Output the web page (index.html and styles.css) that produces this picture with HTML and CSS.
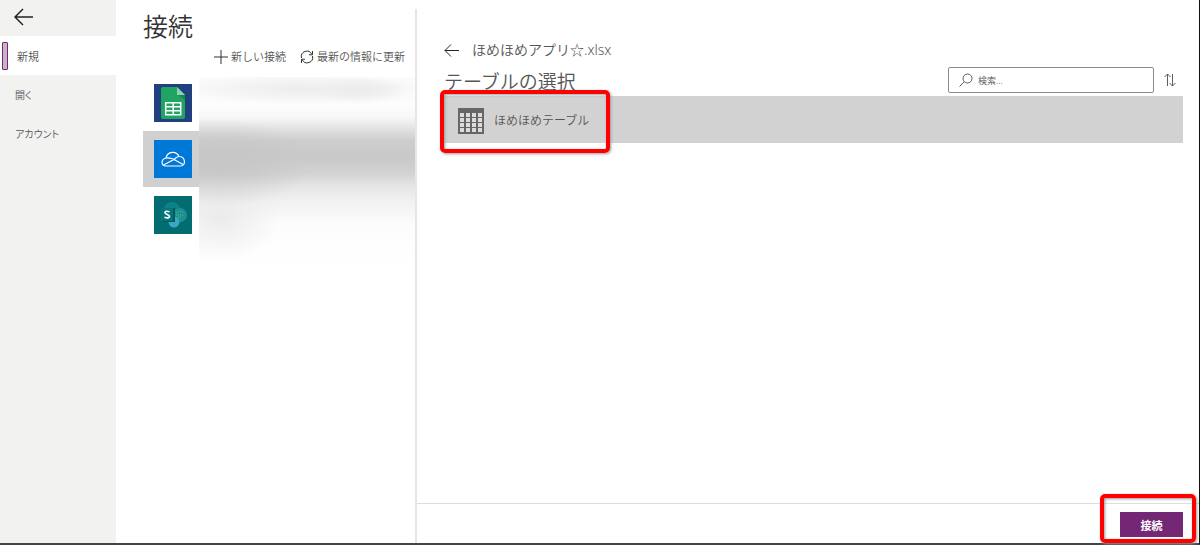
FILE: index.html
```html
<!DOCTYPE html>
<html lang="ja">
<head>
  <meta charset="UTF-8">
  <title>接続</title>
  <meta name="viewport" content="width=device-width, initial-scale=1.0">
  <link rel="stylesheet" href="styles.css">
</head>
<body>

<div class="app">

  <!-- Left menu -->
  <nav class="sidebar">
    <button class="back" type="button" aria-label="戻る">
      <svg width="20" height="18" viewBox="0 0 20 18"><path d="M19 9H1M9 1L1 9l8 8"/></svg>
    </button>
    <a class="nav-item active" href="#new">新規</a>
    <a class="nav-item" href="#open">開く</a>
    <a class="nav-item" href="#account">アカウント</a>
  </nav>

  <!-- Connections -->
  <section class="connections">
    <h1>接続</h1>
    <div class="toolbar">
      <button type="button">
        <svg width="14" height="14" viewBox="0 0 14 14"><path d="M7 0v14M0 7h14"/></svg>
        新しい接続
      </button>
      <button type="button">
        <svg width="14" height="14" viewBox="0 0 14 14"><path d="M1.500 8A5.500 5.500 0 0 1 11.800 4.300M12.500 6A5.500 5.500 0 0 1 2.200 9.700M12.500 1v3.800H9M1.500 13V9.200H5"/></svg>
        最新の情報に更新
      </button>
    </div>
    <ul class="connection-list">
      <li>
        <a href="#sheets" aria-label="Google Sheets">
          <svg class="tile" viewBox="0 0 38 38">
            <path fill="#20407f" d="M0 0h38v38H0z"/>
            <path fill="#1fa463" d="M9 3h14l8 8v22q0 2-2 2H9q-2 0-2-2V5q0-2 2-2z"/>
            <path fill="#8ed1b1" d="M23 3l8 8h-8z"/>
            <path fill="#17864f" d="M24 11h7v5z"/>
            <path fill="none" stroke="#fff" stroke-width="1.500" d="M11.700 18.700h15v12h-15zM19.200 18.700v12M11.700 22.700h15M11.700 26.700h15"/>
          </svg>
        </a>
      </li>
      <li class="selected">
        <a href="#onedrive" aria-label="OneDrive">
          <svg class="tile" viewBox="0 0 38 38">
            <path fill="#0078d7" d="M0 0h38v38H0z"/>
            <g fill="none" stroke="#fff" stroke-width="1.200" stroke-linejoin="round">
              <path d="M12 26C7 26 6.500 19.500 12 18C13.500 11 22.500 10.500 25 16.500C31.500 16.500 32.500 26 26.500 26z"/>
              <path d="M12 18C16 17 19 19 29 24.500M9.500 25L20 19.500C22 18 23 16.500 25 16.500"/>
            </g>
          </svg>
        </a>
      </li>
      <li>
        <a href="#sharepoint" aria-label="SharePoint">
          <svg class="tile" viewBox="0 0 38 38">
            <path fill="#036c70" d="M0 0h38v38H0z"/>
            <circle cx="18" cy="14" r="8" fill="#0b8287"/>
            <circle cx="26" cy="19" r="7" fill="#1a9094"/>
            <circle cx="20" cy="26" r="5.500" fill="#37a8c4"/>
            <path fill="#04595c" d="M9 12h12v14H9z"/>
            <path fill="#067579" d="M7 12h12v13H7z"/>
            <path fill="none" stroke="#66b06e" stroke-dasharray="1 1" d="M22 17q4-3 8 0M22 19h7M24 21h3"/>
            <path fill="none" stroke="#fff" stroke-width="1.700" d="M15.500 15.800Q11 14.300 11 16.700C11.200 18.700 15.600 18.200 15.500 20.500Q15 22.800 10.500 21.300"/>
          </svg>
        </a>
      </li>
      <li class="masked" aria-hidden="true"></li>
    </ul>
  </section>

  <!-- Table picker -->
  <main class="picker">
    <header class="picker-header">
      <div>
        <div class="file">
          <button class="file-back" type="button" aria-label="戻る">
            <svg width="15" height="13" viewBox="0 0 15 13"><path d="M15 6.500H1M7 .5l-6 6 6 6"/></svg>
          </button>
          <span>ほめほめアプリ☆.xlsx</span>
        </div>
        <h2>テーブルの選択</h2>
      </div>
      <div class="tools">
        <label class="search">
          <svg width="14" height="14" viewBox="0 0 14 14"><circle cx="8.500" cy="5.500" r="4.500"/><path d="M5.300 8.700L.5 13.500"/></svg>
          <input type="text" placeholder="検索..." aria-label="検索">
        </label>
        <button class="sort" type="button" aria-label="並べ替え">
          <svg width="14" height="14" viewBox="0 0 14 14"><path d="M4.500 13V1M1.500 4l3-3 3 3M9.500 1v12M6.500 10l3 3 3-3"/></svg>
        </button>
      </div>
    </header>

    <button class="table-row" type="button">
      <svg width="26" height="26" viewBox="0 0 26 26">
        <path fill="#666" d="M0 0h26v26H0z"/>
        <path fill="#dcdcdc" d="M2 5h4v4H2zM8 5h4v4H8zM14 5h4v4h-4zM20 5h4v4h-4zM2 10h4v4H2zM8 10h4v4H8zM14 10h4v4h-4zM20 10h4v4h-4zM2 15h4v4H2zM8 15h4v4H8zM14 15h4v4h-4zM20 15h4v4h-4zM2 20h4v4H2zM8 20h4v4H8zM14 20h4v4h-4zM20 20h4v4h-4z"/>
      </svg>
      <span>ほめほめテーブル</span>
      <i class="mark mark-row"></i>
    </button>

    <footer class="picker-footer">
      <button class="connect" type="button">接続</button>
      <i class="mark mark-footer"></i>
    </footer>
  </main>

</div>

</body>
</html>
```
FILE: styles.css
```css
* {
  box-sizing: border-box;
}

body {
  margin: 0;
  font-family: "Noto Sans", "Noto Sans CJK JP", sans-serif;
  font-size: 11px;
  font-weight: 350;
  color: #555;
  background: #fff;
}

button {
  font: inherit;
  color: inherit;
  background: none;
  border: none;
  padding: 0;
  cursor: pointer;
}

svg {
  flex: none;
  display: block;
}

button svg,
.search svg {
  fill: none;
  stroke: #333;
}

.app {
  display: flex;
  min-height: 100vh;
  border-right: 1px solid #111;
  border-bottom: 2px solid #444;
}

/* left menu */
.sidebar {
  width: 116px;
  flex: none;
  background: #f2f2f0;
}

.back {
  display: block;
  padding: 8px 14px 10px;
}

.back svg {
  stroke: #222;
  stroke-width: 1.5;
}

.nav-item {
  display: flex;
  align-items: center;
  height: 39px;
  padding-left: 15px;
  color: #555;
  text-decoration: none;
  font-size: 10px;
  font-feature-settings: "palt";
}

.nav-item.active {
  background: #fff;
  padding-left: 2px;
  font-size: 11px;
}

.nav-item.active::before {
  content: "";
  width: 4px;
  height: 26px;
  margin-right: 9px;
  border: 1px solid #742774;
  border-radius: 1px;
  background: #c9b3c9;
}

/* connections */
.connections {
  width: 299px;
  flex: none;
  padding: 9px 0 0 27px;
}

h1 {
  margin: 0;
  font-size: 25px;
  line-height: 34px;
  font-weight: 350;
  color: #333;
}

.toolbar {
  display: flex;
  justify-content: flex-end;
  gap: 14px;
  padding: 6px 10px 10px 0;
}

.toolbar button {
  display: flex;
  align-items: center;
  gap: 3px;
  line-height: 16px;
}

.connection-list {
  position: relative;
  list-style: none;
  margin: 0;
  padding: 0;
}

.connection-list a {
  display: block;
  padding: 9px 11px;
}

.connection-list .selected {
  background: #d0d0d0;
}

.tile {
  width: 38px;
  height: 38px;
}

.masked {
  position: absolute;
  left: 56px;
  right: 0;
  top: 2px;
  height: 190px;
  background:
    radial-gradient(ellipse 110px 16px at 100px 12px, #ededed, transparent),
    radial-gradient(ellipse 50px 14px at 160px 13px, #e9e9e9, transparent),
    radial-gradient(ellipse 90px 44px at 22px 86px, #c6c6c6, transparent),
    radial-gradient(ellipse 60px 44px at 22px 140px, #ebebeb, transparent),
    linear-gradient(#fcfcfc, #f8f8f8 10px, #fdfdfd 28px, #f8f8f8 40px, #e2e2e2 52px, #cdcdcd 64px, #c9c9c9 80px, #d2d2d2 96px, #e6e6e6 110px, #f2f2f2 126px, #fcfcfc 146px, #fff);
}

/* table picker */
.picker {
  flex: 1;
  display: flex;
  flex-direction: column;
  margin-top: 9px;
  border-left: 2px solid #e6e6e6;
}

.picker-header {
  display: flex;
  justify-content: space-between;
  align-items: flex-end;
  padding: 31px 22px 0 27px;
}

.file {
  display: flex;
  align-items: center;
  gap: 13px;
  font-size: 14px;
  line-height: 20px;
}

.file-back svg {
  stroke: #222;
}

h2 {
  margin: 8px 0 0;
  font-size: 19px;
  line-height: 28px;
  font-weight: 350;
}

.tools {
  display: flex;
  align-items: center;
  gap: 9px;
  padding-bottom: 3px;
}

.search {
  display: flex;
  align-items: center;
  gap: 5px;
  width: 206px;
  height: 26px;
  padding-left: 10px;
  border: 1px solid #8a8a8a;
  border-radius: 2px;
}

.search svg,
.sort svg {
  stroke: #665566;
}

.search input {
  flex: 1;
  min-width: 0;
  padding: 0;
  border: none;
  outline: none;
  font: inherit;
  font-size: 9px;
}

.search input::placeholder {
  color: #555;
}

.table-row {
  position: relative;
  display: flex;
  align-items: center;
  gap: 10px;
  height: 47px;
  margin: 0 16px 0 27px;
  padding: 3px 14px 0;
  background: #d2d2d2;
  font-size: 12px;
}

.table-row svg {
  stroke: none;
}

.table-row span {
  padding-bottom: 3px;
}

.picker-footer {
  position: relative;
  display: flex;
  justify-content: flex-end;
  margin-top: auto;
  padding: 8px 16px 6px;
  border-top: 1px solid #ddd;
}

.connect {
  width: 63px;
  height: 25px;
  background: #742774;
  color: #fff;
  font-weight: 600;
}

/* red highlight frames */
.mark {
  position: absolute;
  border: 4px solid #f00;
  border-radius: 5px;
  box-shadow: 1px 1px 3px #999, inset 1px 1px 3px #999;
  pointer-events: none;
}

.mark-row {
  left: -4px;
  top: -6px;
  width: 170px;
  height: 63px;
}

.mark-footer {
  right: 3px;
  top: -10px;
  width: 96px;
  height: 49px;
}
```
